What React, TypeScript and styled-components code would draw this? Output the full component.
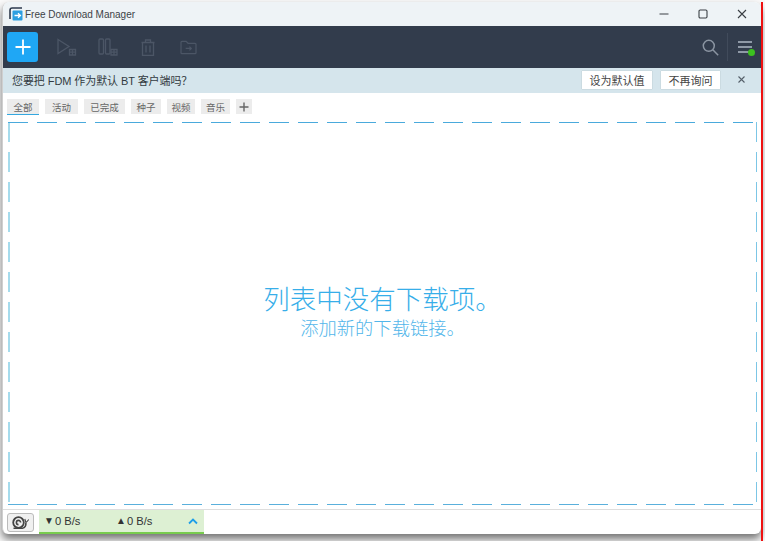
import React from "react";
import styled, { createGlobalStyle } from "styled-components";

const Global = createGlobalStyle`
  html, body { margin: 0; padding: 0; background: #fafafa; height: 541px; overflow: hidden; }
  #root { height: 541px; }
  * { box-sizing: border-box; }
`;

const FONT = `"Liberation Sans", "Noto Sans CJK SC", sans-serif`;

const Page = styled.div`
  width: 765px; height: 541px; padding: 2px 0 0 2px;
  display: flex; font-family: ${FONT}; color: #333;
`;
const RedEdge = styled.div`
  width: 2px; height: 100%; background: #ee1111; flex: none; position: relative;
`;
const Window = styled.div`
  width: 759px; height: 532px; display: flex; flex-direction: column;
  background: #fff; border-radius: 7px 7px 6px 6px; overflow: hidden;
  border-left: 1px solid #cfcfcf;
  box-shadow: 0 5px 8px rgba(0,0,0,.55);
`;
const TitleBar = styled.div`
  height: 24px; flex: none; display: flex; align-items: center;
  background: #eef3f6; padding-left: 6px;
`;
const AppTitle = styled.span`
  font-size: 10px; color: #3d4347; margin-left: 2px; flex: 1;
`;
const WinBtn = styled.div`
  width: 39px; height: 24px; display: flex; align-items: center; justify-content: center; color: #3a3f44;
`;
const ToolBar = styled.div`
  height: 42px; flex: none; background: #323c4c; display: flex; align-items: center; padding-left: 4px;
`;
const AddButton = styled.div`
  width: 31px; height: 30px; border-radius: 3px; background: #1fa7f5; color: #fff;
  display: flex; align-items: center; justify-content: center; margin-right: 15px;
`;
const ToolIcon = styled.div<{ $gap: number }>`
  width: 27px; height: 24px; margin-right: ${(p) => p.$gap}px; display: flex; align-items: center; justify-content: center; flex: none;
`;
const Grow = styled.div`flex: 1;`;
const SearchIcon = styled.div`
  width: 24px; height: 24px; display: flex; align-items: center; justify-content: center; margin-right: 5px;
`;
const Sep = styled.div`
  width: 1px; height: 28px; background: #414b5b; margin-right: 10px;
`;
const MenuIcon = styled.div`
  position: relative; width: 15px; height: 15px; margin-right: 8px; flex: none;
  display: flex; flex-direction: column; justify-content: flex-start; gap: 3px; padding-top: 1px;
`;
const MenuLine = styled.div`height: 2px; background: #8f99a6; width: 14px;`;
const Dot = styled.div`
  position: absolute; right: -2px; bottom: -1px; width: 7px; height: 7px; border-radius: 50%; background: #3cc11f;
`;
const NoticeBar = styled.div`
  height: 25px; flex: none; background: #d5e5ec; display: flex; align-items: center; padding: 0 0 2px 9px;
  font-size: 11px; color: #333b41;
`;
const NoticeText = styled.span`flex: 1; letter-spacing: -.08px;`;
const NoticeButton = styled.div<{ $w: number }>`
  height: 18px; background: #fff; display: flex; align-items: center; justify-content: center;
  width: ${(p) => p.$w}px; margin-right: 9px; font-size: 11px; color: #444; box-shadow: 0 0 1px rgba(0,0,0,.25);
`;
const NoticeClose = styled.div`
  width: 28px; display: flex; justify-content: center; margin-left: -2px; margin-right: 6px;
`;
const Tabs = styled.div`
  height: 25px; flex: none; display: flex; align-items: flex-start; padding: 6px 0 0 4px; gap: 6px;
`;
const Tab = styled.div<{ $active?: boolean; $w: number }>`
  height: ${(p) => (p.$active ? 16 : 15)}px; width: ${(p) => p.$w}px; background: #ececec; font-size: 9.5px; color: #666;
  display: flex; align-items: center; justify-content: center; flex: none;
  border-bottom: ${(p) => (p.$active ? "1px solid #35a8e0" : "none")};
`;
const DropWrap = styled.div`
  flex: 1; padding: 4px 4px 4px 5px; display: flex;
`;
const DropArea = styled.div`
  flex: 1; display: flex; flex-direction: column; align-items: center; justify-content: center;
  color: #37aee9;
  background:
    repeating-linear-gradient(90deg, #4aaadc 0 20px, transparent 20px 29px) top left / 100% 1px no-repeat,
    repeating-linear-gradient(90deg, #5ab0dc 0 20px, transparent 20px 29px) bottom left / 100% 1px no-repeat,
    repeating-linear-gradient(180deg, #a5dbec 0 20px, transparent 20px 30px) top left / 2px 100% no-repeat,
    repeating-linear-gradient(180deg, #7cc6e6 0 20px, transparent 20px 30px) top right / 1px 100% no-repeat;
`;
const EmptyTitle = styled.div`
  font-size: 26.5px; line-height: 32px; font-weight: 300; margin-top: -2px;
`;
const EmptySub = styled.div`
  font-size: 18.3px; line-height: 26px; font-weight: 300; color: #52b6ea;
`;
const Footer = styled.div`
  height: 25px; flex: none; display: flex; align-items: stretch; border-top: 1px solid #dedede;
  padding-left: 4px;
`;
const SnailButton = styled.div`
  width: 27px; height: 19px; margin: 3px 5px 0 0; background: #f0f0f0; border: 1px solid #bbb; border-radius: 3px;
  display: flex; align-items: center; justify-content: center; flex: none;
`;
const Speed = styled.div`
  width: 165px; height: 24px; background: #ddf0d3; border-bottom: 2.5px solid #78cc4e;
  display: flex; align-items: center; padding-left: 5px; color: #333;
`;
const SpeedItem = styled.div`
  width: 73px; display: flex; align-items: center; gap: 1px; font-size: 11.2px;
`;
const Arrow = styled.span`font-size: 10px; line-height: 1;`;
const Chevron = styled.div`
  margin-left: auto; margin-right: 6px; display: flex; align-items: center;
`;

const tabs = [
  ["全部", 32],
  ["活动", 33],
  ["已完成", 41],
  ["种子", 30],
  ["视频", 28],
  ["音乐", 29],
] as const;

const App = () => (
  <Page>
    <Global />
    <Window>
      <TitleBar>
        <svg width="14" height="14" viewBox="0 0 14 14">
          <path d="M13 1H3.2C2 1 1 2 1 3.2V12" fill="none" stroke="#2d3a4d" strokeWidth="1.6" />
          <rect x="3.5" y="3.5" width="10" height="10" rx="1" fill="#2c9fe0" />
          <path d="M5.5 8.5h6M9 6.3l2.4 2.2L9 10.7" fill="none" stroke="#fff" strokeWidth="1.3" />
        </svg>
        <AppTitle>Free Download Manager</AppTitle>
        <WinBtn>
          <svg width="10" height="10" viewBox="0 0 10 10"><path d="M0.5 5h9" stroke="currentColor" strokeWidth="1" /></svg>
        </WinBtn>
        <WinBtn>
          <svg width="10" height="10" viewBox="0 0 10 10"><rect x="1" y="1" width="8" height="8" rx="1.2" fill="none" stroke="currentColor" strokeWidth="1.1" /></svg>
        </WinBtn>
        <WinBtn>
          <svg width="10" height="10" viewBox="0 0 10 10"><path d="M1 1l8 8M9 1l-8 8" stroke="currentColor" strokeWidth="1.1" /></svg>
        </WinBtn>
      </TitleBar>
      <ToolBar>
        <AddButton>
          <svg width="16" height="16" viewBox="0 0 16 16"><path d="M8 0.5v15M0.5 8h15" stroke="#fff" strokeWidth="1.8" /></svg>
        </AddButton>
        <ToolIcon $gap={14}>
          <svg width="22" height="18" viewBox="0 0 22 18" fill="none" stroke="#4c5666" strokeWidth="1.3">
            <path d="M2 1.5L13 8.5 2 15.5z" />
            <path d="M13.5 11.5h6v5.5h-6zM16.5 11.5v5.5M13.5 14.2h6" />
          </svg>
        </ToolIcon>
        <ToolIcon $gap={13}>
          <svg width="20" height="18" viewBox="0 0 20 18" fill="none" stroke="#4c5666" strokeWidth="1.3">
            <rect x="1" y="1" width="4.5" height="15" rx="1" />
            <rect x="7.5" y="1" width="4.5" height="15" rx="1" />
            <path d="M13 11.5h6v5.5h-6zM16 11.5v5.5M13 14.2h6" />
          </svg>
        </ToolIcon>
        <ToolIcon $gap={14}>
          <svg width="14" height="17" viewBox="0 0 14 17" fill="none" stroke="#4c5666" strokeWidth="1.3">
            <path d="M0.5 3.5h13M4.5 3.5V1h5v2.5M1.5 3.5v13h11v-13M5 6.5v7M9 6.5v7" />
          </svg>
        </ToolIcon>
        <ToolIcon $gap={0}>
          <svg width="17" height="15" viewBox="0 0 18 16" fill="none" stroke="#4c5666" strokeWidth="1.3">
            <path d="M1 2.5a1 1 0 011-1h4.5l2 2h7.5a1 1 0 011 1v9a1 1 0 01-1 1H2a1 1 0 01-1-1z" />
            <path d="M6 9h6M10 7l2 2-2 2" />
          </svg>
        </ToolIcon>
        <Grow />
        <SearchIcon>
          <svg width="17" height="17" viewBox="0 0 17 17" fill="none" stroke="#8b95a2" strokeWidth="1.5">
            <circle cx="6.8" cy="6.8" r="5.5" />
            <path d="M10.8 10.8l5.4 5.4" />
          </svg>
        </SearchIcon>
        <Sep />
        <MenuIcon>
          <MenuLine />
          <MenuLine />
          <MenuLine />
          <Dot />
        </MenuIcon>
      </ToolBar>
      <NoticeBar>
        <NoticeText>您要把 FDM 作为默认 BT 客户端吗？</NoticeText>
        <NoticeButton $w={70}>设为默认值</NoticeButton>
        <NoticeButton $w={59}>不再询问</NoticeButton>
        <NoticeClose>
          <svg width="7" height="7" viewBox="0 0 7 7"><path d="M0.5 0.5l6 6M6.5 0.5l-6 6" stroke="#55606a" strokeWidth="1.1" /></svg>
        </NoticeClose>
      </NoticeBar>
      <Tabs>
        {tabs.map(([label, w], i) => (
          <Tab key={label} $active={i === 0} $w={w}>{label}</Tab>
        ))}
        <Tab $w={16}>
          <svg width="10" height="10" viewBox="0 0 10 10"><path d="M5 0.5v9M0.5 5h9" stroke="#666" strokeWidth="1.4" /></svg>
        </Tab>
      </Tabs>
      <DropWrap>
        <DropArea>
          <EmptyTitle>列表中没有下载项。</EmptyTitle>
          <EmptySub>添加新的下载链接。</EmptySub>
        </DropArea>
      </DropWrap>
      <Footer>
        <SnailButton>
          <svg width="19" height="14" viewBox="0 0 19 14" fill="none" stroke="#444">
            <circle cx="7.5" cy="6.5" r="5.3" strokeWidth="1.8" />
            <path d="M7.5 8.6a2.1 2.1 0 1 1 2.1-2.1" strokeWidth="1.6" />
            <path d="M2.5 12.2h9c2.6 0 3.6-2.7 3.4-5.7" strokeWidth="1.6" />
            <path d="M15 6.5l-1.2-3.5M15.2 6.5l2.6-3" strokeWidth="1.1" />
          </svg>
        </SnailButton>
        <Speed>
          <SpeedItem><Arrow>▼</Arrow>0 B/s</SpeedItem>
          <SpeedItem><Arrow>▲</Arrow>0 B/s</SpeedItem>
          <Chevron>
            <svg width="10" height="7" viewBox="0 0 10 7"><path d="M1 5.5L5 1.5l4 4" fill="none" stroke="#1f9fe8" strokeWidth="1.8" /></svg>
          </Chevron>
        </Speed>
      </Footer>
    </Window>
    <RedEdge />
  </Page>
);

export default App;
